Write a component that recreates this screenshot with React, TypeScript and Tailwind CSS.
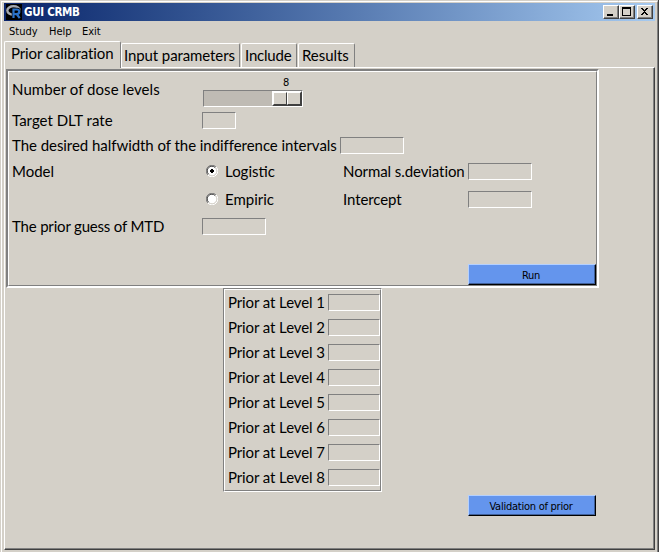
import React from "react";

const LABEL = "block h-[17px] whitespace-nowrap font-['Lato','Liberation_Sans',sans-serif] text-[15px] leading-[17px] text-black";
const SMALL = "font-['DejaVu_Sans_Condensed','DejaVu_Sans',sans-serif] text-[11px] text-black [font-stretch:condensed]";
const SUNKEN = "block h-[17px] shrink-0 border border-t-[#808080] border-l-[#808080] border-r-white border-b-white";

function Label({ children, className = "" }: { children: React.ReactNode; className?: string }) {
  return (
    <span className={`${LABEL} ${className}`}>
      <span>{children}</span>
    </span>
  );
}

function Entry({ className = "w-16" }: { className?: string }) {
  return <span className={`${SUNKEN} ${className}`} />;
}

function Radio({ checked = false }: { checked?: boolean }) {
  return (
    <svg className="block h-3 w-3" viewBox="0 0 12 12" aria-hidden="true">
      <circle cx="6" cy="6" r="5" fill="#fff" />
      <path d="M1.9 10.1A5.5 5.5 0 0 1 10.1 1.9" fill="none" stroke="#808080" />
      <path d="M2.6 9.2A4.6 4.6 0 0 1 9.2 2.6" fill="none" stroke="#404040" />
      <path d="M10.1 1.9A5.5 5.5 0 0 1 1.9 10.1" fill="none" stroke="#fff" />
      <path d="M9.4 2.8A4.6 4.6 0 0 1 2.8 9.4" fill="none" stroke="#d4d0c8" />
      {checked && <path d="M5 4h2v1h1v2h-1v1h-2v-1h-1v-2h1z" fill="#000" shapeRendering="crispEdges" />}
    </svg>
  );
}

function CaptionButton({ children, className = "" }: { children: React.ReactNode; className?: string }) {
  return (
    <button className={`h-[14px] w-4 border border-t-white border-l-white border-r-[#404040] border-b-[#404040] bg-[#d4d0c8] ${className}`}>
      <svg className="block h-3 w-[14px] border-r border-b border-[#808080]" viewBox="0 0 13 11" shapeRendering="crispEdges">
        {children}
      </svg>
    </button>
  );
}

function BlueButton({ children, className = "" }: { children: React.ReactNode; className?: string }) {
  return (
    <button className={`block h-[21px] w-32 border border-t-[#b4d0ff] border-l-[#b4d0ff] border-r-black border-b-black bg-[#6495ed] ${className}`}>
      <span className={`flex h-full items-center justify-center border-r border-b border-[#3f5f98] leading-none tracking-[-0.25px] whitespace-nowrap ${SMALL}`}>
        <span className="pt-[2px] pr-px">{children}</span>
      </span>
    </button>
  );
}

function Tab({ children, className }: { children: React.ReactNode; className: string }) {
  return (
    <div className={`h-6 rounded-t-[2px] border-t border-r border-l border-t-white border-r-[#808080] border-l-white pt-[3px] ${className}`}>
      <Label>{children}</Label>
    </div>
  );
}

function RLogo() {
  return (
    <svg className="block h-4 w-4" viewBox="0 0 16 16">
      <rect width="16" height="16" fill="#000" />
      <ellipse cx="7.5" cy="6.5" rx="6.2" ry="4.2" fill="none" stroke="#a5a9b0" strokeWidth="2.4" />
      <path d="M7.5 14V5.5H11a2.2 2.2 0 0 1 0 4.5H8M10.7 10l3 4.2" fill="none" stroke="#000" strokeWidth="3.4" />
      <path d="M7.5 14V5.5H11a2.2 2.2 0 0 1 0 4.5H8M10.7 10l3 4.2" fill="none" stroke="#2a72c8" strokeWidth="2.2" />
    </svg>
  );
}

export default function App() {
  return (
    <div className="h-[552px] w-[659px] overflow-hidden border-r border-[#404040] bg-[#d4d0c8]">
      <div className="h-[552px] border-t border-l border-[#d4d0c8]">
        <div className="h-[551px] border-t border-r border-l border-t-white border-r-[#808080] border-l-white pt-px pr-[2px] pl-[2px]">
          <header className="flex h-[18px] items-start bg-linear-to-r from-[#0a246a] to-[#a6caf0] pt-px pl-[2px]">
            <RLogo />
            <span className="ml-[2px] w-[579px] font-['DejaVu_Sans_Condensed','DejaVu_Sans',sans-serif] text-[11.5px] leading-[17px] font-bold tracking-[-0.3px] text-white [font-stretch:condensed]">GUI CRMB</span>
            <div className="flex pt-px">
              <CaptionButton><path d="M3 8h6v2h-6z" /></CaptionButton>
              <CaptionButton><path d="M2 1h9v9h-9zM3 3v6h7v-6z" fillRule="evenodd" /></CaptionButton>
              <CaptionButton className="ml-[2px]">
                <path d="M3 2h2v1h1v1h1v-1h1v-1h2v1h-1v1h-1v1h-1v1h1v1h1v1h1v1h-2v-1h-1v-1h-1v1h-1v1h-2v-1h1v-1h1v-1h1v-1h-1v-1h-1v-1h-1z" />
              </CaptionButton>
            </div>
          </header>

          <nav className={`flex h-5 leading-[21px] ${SMALL}`}>
            <span className="ml-[5px] w-10">Study</span>
            <span className="w-[33px]">Help</span>
            <span>Exit</span>
          </nav>

          <div className="relative z-10 flex h-[26px] items-end">
            <div className="-mb-px h-[27px] w-[117px] rounded-t-[2px] border-t border-r border-l border-t-white border-r-[#808080] border-l-white bg-[#d4d0c8] pt-[3px] pl-[6px]">
              <Label className="tracking-[-0.1px]">Prior calibration</Label>
            </div>
            <Tab className="w-[119px] pl-[2px] tracking-[-0.1px]">Input parameters</Tab>
            <Tab className="ml-px w-14 pl-[3px] tracking-[-0.2px]">Include</Tab>
            <Tab className="ml-px w-[57px] pl-[3px] tracking-[-0.05px]">Results</Tab>
          </div>

          <main className="h-[483px] w-[651px] border border-t-white border-r-[#404040] border-b-[#404040] border-l-white">
            <div className="h-[481px] border-r border-b border-[#808080] pt-px pl-px">
              <section className="h-[219px] w-[593px] border border-t-[#808080] border-r-white border-b-white border-l-[#808080]">
                <div className="h-[217px] border border-t-[#808080] border-r-white border-b-white border-l-[#808080]">
                  <div className="h-[215px] border border-t-white border-r-[#808080] border-b-[#808080] border-l-white pl-[3px]">
                    <div className="flex h-10">
                      <Label className="w-[191px] pt-[9px] tracking-[0.06px]">Number of dose levels</Label>
                      <div className="w-[100px] pt-[5px]">
                        <div className={`h-[13px] pl-[80px] leading-[11px] ${SMALL}`}>8</div>
                        <div className="flex h-[17px] justify-end border border-t-[#808080] border-r-white border-b-white border-l-[#808080] bg-[#bfbbb4]">
                          <div className="flex h-[15px] w-[30px] border border-t-white border-r-[#404040] border-b-[#404040] border-l-white bg-[#d4d0c8]">
                            <div className="w-[14px] border border-t-white border-r-[#404040] border-b-[#404040] border-l-white" />
                            <div className="w-[14px] border border-t-white border-r-[#404040] border-b-[#404040] border-l-white" />
                          </div>
                        </div>
                      </div>
                    </div>
                    <div className="flex h-[25px]">
                      <Label className="w-[190px]">Target DLT rate</Label>
                      <Entry className="w-[34px]" />
                    </div>
                    <div className="flex h-[26px]">
                      <Label className="w-[328px] tracking-[-0.05px]">The desired halfwidth of the indifference intervals</Label>
                      <Entry />
                    </div>
                    <div className="flex h-7">
                      <Label className="w-[194px]">Model</Label>
                      <div className="w-[19px] pt-[2px]"><Radio checked /></div>
                      <Label className="w-[118px]">Logistic</Label>
                      <Label className="w-[125px] tracking-[-0.08px]">Normal s.deviation</Label>
                      <Entry />
                    </div>
                    <div className="flex h-[27px] pl-[194px]">
                      <div className="w-[19px] pt-[2px]"><Radio /></div>
                      <Label className="w-[118px]">Empiric</Label>
                      <Label className="w-[125px] tracking-[-0.1px]">Intercept</Label>
                      <Entry />
                    </div>
                    <div className="flex h-[46px]">
                      <Label className="w-[190px] tracking-[-0.18px]">The prior guess of MTD</Label>
                      <Entry />
                    </div>
                    <BlueButton className="ml-[456px]">Run</BlueButton>
                  </div>
                </div>
              </section>

              <section className="ml-[217px] h-[204px] w-[159px] border border-t-[#808080] border-r-white border-b-white border-l-[#808080]">
                <div className="h-[202px] border border-t-white border-r-[#808080] border-b-[#808080] border-l-white pt-1 pl-[3px]">
                  {[1, 2, 3, 4, 5, 6, 7, 8].map((level) => (
                    <div key={level} className="flex h-[25px]">
                      <Label className="w-[100px] tracking-[-0.1px]">Prior at Level {level}</Label>
                      <Entry className="w-[52px]" />
                    </div>
                  ))}
                </div>
              </section>
              <BlueButton className="mt-[3px] ml-[462px]">Validation of prior</BlueButton>
            </div>
          </main>
        </div>
      </div>
    </div>
  );
}
